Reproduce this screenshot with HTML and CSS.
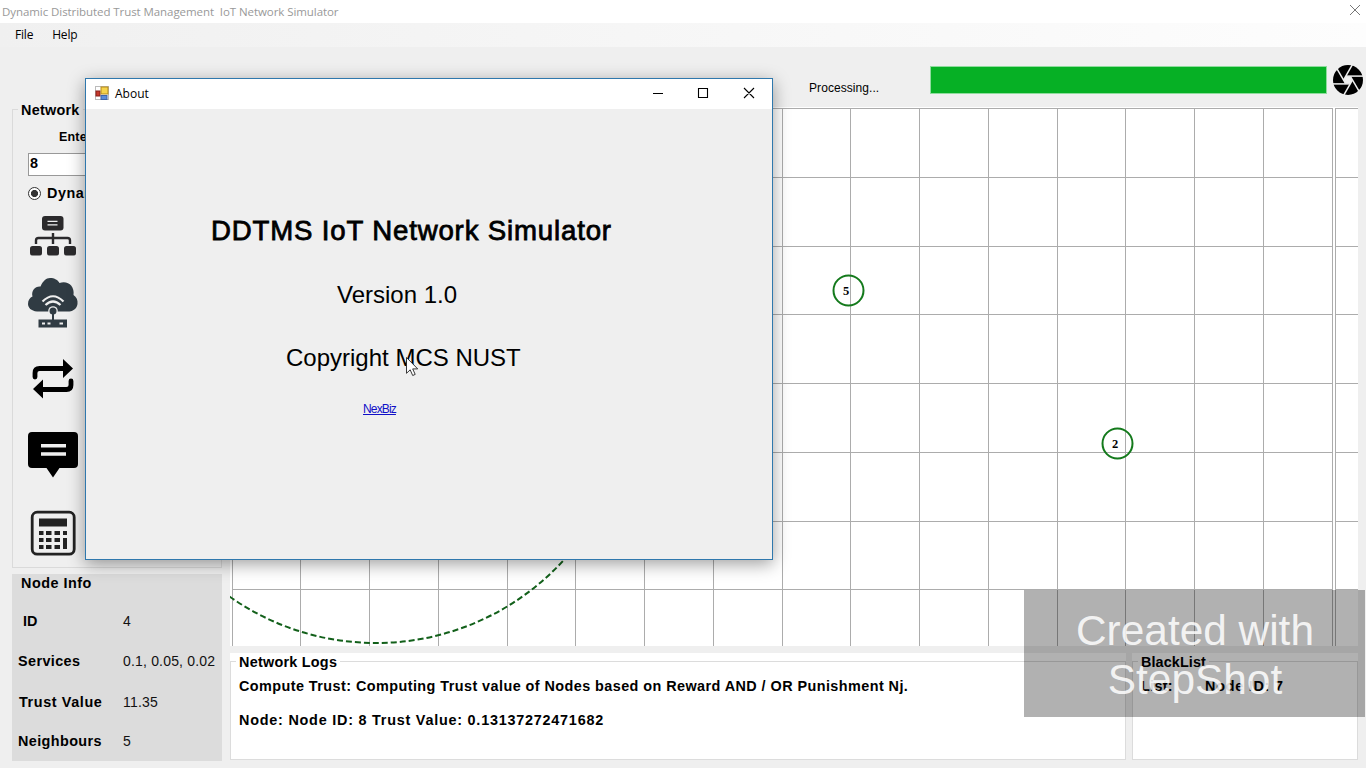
FILE: index.html
```html
<!DOCTYPE html>
<html lang="en">
<head>
<meta charset="utf-8">
<title>Dynamic Distributed Trust Management IoT Network Simulator</title>
<link rel="stylesheet" href="styles.css">
</head>
<body>
<div class="window">
  <header class="titlebar">
    <span class="title">Dynamic Distributed Trust Management&nbsp; IoT Network Simulator</span>
    <svg class="close" width="12" height="12" viewBox="0 0 12 12"><path d="M1 1 11 11M11 1 1 11" stroke="#777" fill="none"/></svg>
  </header>
  <nav class="menubar"><span>File</span><span>Help</span></nav>
  <div class="toolbar">
    <span class="status">Processing...</span>
    <div class="progress"></div>
    <svg class="shutter" width="32" height="32" viewBox="-16 -16 32 32">
      <circle r="15" fill="#000"/>
      <path d="M-2.200-3.800 2.200-3.800 4.400 0 2.200 3.800-2.200 3.800-4.400 0Z" fill="#efefef"/>
      <g stroke="#efefef" stroke-width="1.500">
        <path d="M-2-3.900H15.500"/>
        <path d="M-2-3.900H15.500" transform="rotate(60)"/>
        <path d="M-2-3.900H15.500" transform="rotate(120)"/>
        <path d="M-2-3.900H15.500" transform="rotate(180)"/>
        <path d="M-2-3.900H15.500" transform="rotate(240)"/>
        <path d="M-2-3.900H15.500" transform="rotate(300)"/>
      </g>
    </svg>
  </div>
  <main class="content">
    <aside class="side">
      <section class="network">
        <h2 class="legend">Network</h2>
        <div class="enter">Enter</div>
        <div class="field">8</div>
        <div class="radio"><i class="dot"></i><span>Dynamic</span></div>
        <div class="tools">
          <svg width="50" height="50" viewBox="0 0 50 50"><g fill="#2b2a2c"><rect x="14" y="6" width="21.500" height="14.500" rx="3"/><rect x="2" y="36" width="12" height="9.500" rx="2.500"/><rect x="19" y="36" width="12" height="9.500" rx="2.500"/><rect x="36" y="36" width="12" height="9.500" rx="2.500"/></g><path d="M19.500 11.300h10M19.500 14.800h10" stroke="#efefef" stroke-width="1.200"/><path d="M25 23v11M8 34v-3.500q0-2.500 2.500-2.500h29q2.500 0 2.500 2.500V34" fill="none" stroke="#2b2a2c" stroke-width="2.400"/></svg>
          <svg width="50" height="50" viewBox="0 0 50 50"><g fill="#303b43"><path d="M9 33.500C3 33 0 29.500 0 26c0-4 2-6.500 4.500-7.500C3 13 7 8 12.500 8.500 15 3 18 0 22 0c4.500 0 8 2 9.500 5 8-3 15.500 3 14 12 3 2 4.500 5 4 9-.6 4.500-4 7-8 7.500Z"/><rect x="10.500" y="41.500" width="28.500" height="8"/></g><g fill="none" stroke="#efefef" stroke-width="2.200"><path d="M14.500 23.500q10.500-10.500 21 0M17.500 27q7.500-7 15 0"/></g><circle cx="25" cy="33" r="4.800" fill="#efefef"/><circle cx="25" cy="33" r="3.500" fill="#303b43"/><path d="M25 36v6" stroke="#303b43" stroke-width="2"/><path d="M14 45.500h3M19.500 45.500h3M31.500 45.500h3.500" stroke="#efefef" stroke-width="2"/></svg>
          <svg width="50" height="50" viewBox="0 0 50 50"><path d="M7 23v-4q0-4.500 4.500-4.500H37M43 27v4q0 4.500-4.500 4.500H13" fill="none" stroke="#000" stroke-width="4.800" stroke-linecap="round"/><path d="M35 5v19L45 14.500ZM15 25.500v19L5 35Z"/></svg>
          <svg width="50" height="50" viewBox="0 0 50 50"><path d="M4 2h42q4 0 4 4v28q0 4-4 4H31.500L25 47.500 18.500 38H4q-4 0-4-4V6q0-4 4-4Z"/><path d="M13 15.700h25M13 24h25" stroke="#efefef" stroke-width="3.500"/></svg>
          <svg width="50" height="50" viewBox="0 0 50 50"><rect x="4.200" y="4.200" width="42" height="42" rx="5" fill="none" stroke="#222" stroke-width="2.800"/><g fill="#222"><path d="M11 10.500h28v8H11zM11 23h4.500v4H11zM18 23h5.500v4H18zM26.500 23H32v4h-5.500zM35 23h4v4h-4zM11 30h4.500v4H11zM18 30h5.500v4H18zM26.500 30H32v4h-5.500zM35 30h4v11h-4zM11 37h4.500v4H11zM18 37h5.500v4H18zM26.500 37H32v4h-5.500z"/></g></svg>
        </div>
      </section>
      <section class="info">
        <h2 class="info-title">Node Info</h2>
        <dl class="row id"><dt>ID</dt><dd>4</dd></dl>
        <dl class="row services"><dt>Services</dt><dd>0.1, 0.05, 0.02</dd></dl>
        <dl class="row trust"><dt>Trust Value</dt><dd>11.35</dd></dl>
        <dl class="row near"><dt>Neighbours</dt><dd>5</dd></dl>
      </section>
    </aside>
    <div class="right">
      <svg class="board" width="1128" height="539" viewBox="230 107 1128 539">
        <rect x="230" y="107" width="1128" height="539" fill="#fff"/>
        <path class="lines" d="M232 108.500H1333M232 177.500H1333M232 246.500H1333M232 314.500H1333M232 383.500H1333M232 452.500H1333M232 521.500H1333M232 589.500H1333M1335 108.500h23M1335 177.500h23M1335 246.500h23M1335 314.500h23M1335 383.500h23M1335 452.500h23M1335 521.500h23M1335 589.500h23"/>
        <path class="lines" d="M232.500 108V646M300.500 108V646M369.500 108V646M438.500 108V646M507.500 108V646M575.500 108V646M644.500 108V646M713.500 108V646M782.500 108V646M850.500 108V646M919.500 108V646M988.500 108V646M1057.500 108V646M1125.500 108V646M1194.500 108V646M1263.500 108V646M1332.500 108V646M1335.500 108V646"/>
        <circle class="range" cx="376" cy="389" r="254"/>
        <circle class="node" cx="848.500" cy="290.500" r="15"/><text class="node-id" x="846" y="295">5</text>
        <circle class="node" cx="1117.500" cy="443.500" r="15"/><text class="node-id" x="1115" y="448">2</text>
      </svg>
      <div class="bottom">
        <section class="group logs">
          <h2 class="legend">Network Logs</h2>
          <p class="log1">Compute Trust: Computing Trust value of Nodes based on Reward AND / OR Punishment Nj.</p>
          <p class="log2">Node: Node ID: 8 Trust Value: 0.13137272471682</p>
        </section>
        <section class="group black">
          <h2 class="legend">BlackList</h2>
          <p class="list"><span>List:</span><span class="item">Node ID: 7</span></p>
        </section>
      </div>
    </div>
  </main>
</div>

<div class="dialog">
  <div class="dialog-bar">
    <svg class="app" width="14" height="14" viewBox="0 0 14 14"><rect x=".5" y=".5" width="13" height="13" fill="#fff" stroke="#bbb"/><rect x="1" y="5" width="4" height="5" fill="#c5392b" stroke="#8a1f1a"/><rect x="6" y="1" width="7" height="7" fill="#f5d34c" stroke="#b58a1a"/><rect x="6" y="9.500" width="6" height="4" fill="#5b8bd8" stroke="#3d63a8"/></svg>
    <span class="dialog-title">About</span>
    <svg class="controls" width="104" height="12" viewBox="0 0 104 12"><path d="M1 6.500h10M46.500 1.500h9v9h-9zM92 1l10 10M102 1 92 11" fill="none" stroke="#000" stroke-width="1.100"/></svg>
  </div>
  <div class="dialog-body">
    <h1>DDTMS IoT Network Simulator</h1>
    <p class="version">Version 1.0</p>
    <p class="copy">Copyright MCS NUST</p>
    <a class="link">NexBiz</a>
  </div>
</div>
<svg class="cursor" width="13" height="20" viewBox="0 0 13 20"><path d="M.5.500v15.800l3.700-3.500 2.500 5.700 2.500-1.100-2.500-5.500h5Z" fill="#fff" stroke="#222" stroke-width=".9"/></svg>
<div class="watermark">Created with<br>StepShot</div>
</body>
</html>
```
FILE: styles.css
```css
* { box-sizing: border-box; }
body, h1, h2, p, dl, dd { margin: 0; }
body {
  width: 1366px; height: 768px; overflow: hidden;
  background: #efefef; color: #000;
  font-family: "Liberation Sans", Arial, sans-serif;
  font-size: 14px; line-height: 16px;
}
svg { display: block; flex: none; }
.window { height: 768px; display: flex; flex-direction: column; }
.titlebar {
  height: 23px; background: #fff; display: flex; justify-content: space-between;
  padding: 4px 5px 0 2px;
}
.title { font: 11.5px/16px "Open Sans", sans-serif; color: #999; white-space: nowrap; letter-spacing: -.07px; }
.menubar {
  height: 24px; padding: 4px 15px; display: flex; gap: 19px;
  background: linear-gradient(90deg, #f0f0f0, #fdfdfd);
  font: 12px/16px "Open Sans", sans-serif; letter-spacing: -.2px;
}
.toolbar { height: 60px; display: flex; padding-left: 809px; }
.status { width: 121px; padding-top: 33px; font-size: 12px; letter-spacing: .07px; }
.progress { width: 397px; height: 28px; margin-top: 19px; background: #06b025; border: 1px solid #8fdc9d; }
.shutter { margin: 17px 0 0 5px; }
.content { flex: 1; display: flex; gap: 8px; padding-left: 12px; }
.side { width: 210px; display: flex; flex-direction: column; gap: 6px; padding-top: 2px; }
.network { height: 459px; border: 1px solid #dadada; }
h2, dt, .field, .radio, .logs p, .list { font-size: 14.4px; font-weight: bold; }
.legend { width: max-content; line-height: 16px; letter-spacing: .25px; }
.network .legend { margin: -8px 0 0 5px; padding: 0 3px; background: #efefef; }
.enter { margin: 11px 0 0 46px; font-size: 12.5px; font-weight: bold; letter-spacing: .2px; }
.field { height: 23px; margin: 8px 15px 0; border: 1px solid #999; background: #fff; padding: 1px; line-height: 17px; }
.radio { display: flex; align-items: center; gap: 6px; margin: 9px 0 0 15px; letter-spacing: .5px; }
.radio span { height: 16px; }
.dot { width: 13px; height: 13px; border: 1px solid #333; border-radius: 50%; background: radial-gradient(circle, #333 0 3.2px, #fff 3.9px); }
.tools { display: grid; grid-template-rows: 68px 76px 76px 78px 50px; margin: 9px 0 0 15px; }
.info { height: 187px; background: #dcdcdc; padding-top: 1px; }
.info-title { margin-left: 9px; letter-spacing: .5px; }
.row { display: flex; height: 16px; }
.row dt { width: 105px; flex: none; margin-left: 6px; letter-spacing: .4px; }
.row dd { white-space: nowrap; letter-spacing: .18px; color: #111; }
.id { margin-top: 22px; }
.row.id dt { margin-left: 11px; width: 100px; letter-spacing: 0; }
.services { margin-top: 24px; }
.trust { margin-top: 25px; }
.row.trust dt { margin-left: 7px; width: 104px; letter-spacing: .6px; }
.near { margin-top: 23px; }
.right { width: 1128px; display: flex; flex-direction: column; gap: 7px; }
.lines { fill: none; stroke: #acacac; shape-rendering: crispEdges; }
.range { fill: none; stroke: #12601a; stroke-width: 2; stroke-dasharray: 6 3; }
.node { fill: none; stroke: #147a1c; stroke-width: 2; }
.node-id { font: bold 12.5px "Liberation Serif", serif; text-anchor: middle; }
.bottom { display: flex; gap: 6px; height: 107px; }
.group {
  background: linear-gradient(#dcdcdc, #dcdcdc) 0 8px / 100% 1px no-repeat,
    linear-gradient(#dcdcdc, #dcdcdc) 0 8px / 1px 100% no-repeat,
    linear-gradient(#dcdcdc, #dcdcdc) 100% 8px / 1px 100% no-repeat, #fff;
  border-bottom: 1px solid #dcdcdc;
  padding-top: 1px;
}
.logs { width: 896px; }
.black { width: 226px; }
.group .legend { margin-left: 6px; padding: 0 3px; background: #fff; }
.logs p { margin-left: 9px; white-space: nowrap; }
.logs .log1 { margin-top: 8px; letter-spacing: .44px; }
.logs .log2 { margin-top: 18px; letter-spacing: .77px; }
.black .legend { letter-spacing: .1px; }
.list { display: flex; margin: 8px 0 0 9px; letter-spacing: .3px; }
.list span:first-child { width: 64px; }
.list .item { letter-spacing: .75px; }
.dialog {
  position: absolute; left: 85px; top: 78px; width: 688px; height: 482px;
  border: 1px solid #2f78ad; background: #efefef;
  box-shadow: 0 4px 16px rgba(0,0,0,.38);
}
.dialog-bar { height: 30px; background: #fff; display: flex; padding: 7px 16px 0 9px; }
.dialog-title { font: 12px/16px "Open Sans", sans-serif; margin-left: 6px; flex: 1; }
.dialog-bar .controls { margin-top: 1px; }
.dialog-body { display: flex; flex-direction: column; align-items: flex-start; }
h1 { margin: 106px 0 0 125px; font-size: 27.6px; line-height: 32px; font-weight: normal; letter-spacing: .84px; -webkit-text-stroke: .8px #000; white-space: nowrap; }
.version { margin: 34px 0 0 251px; font-size: 24px; line-height: 28px; }
.copy { margin: 35px 0 0 200px; font-size: 24px; line-height: 28px; }
.link { margin: 29px 0 0 277px; font-size: 12px; letter-spacing: -.85px; color: #1010c8; text-decoration: underline; }
.cursor { position: absolute; left: 406px; top: 357px; }
.watermark {
  position: absolute; left: 1024px; top: 590px; width: 341px; height: 127px;
  background: rgba(0,0,0,.305); color: rgba(255,255,255,.86);
  font-size: 42.4px; line-height: 48.5px; text-align: center; padding: 17px 0 0 1px;
}
```
